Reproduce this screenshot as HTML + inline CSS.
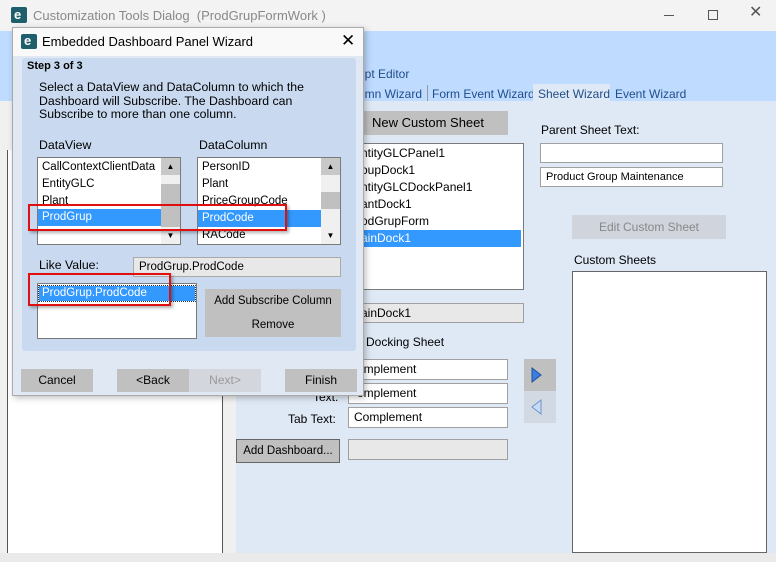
<!DOCTYPE html>
<html><head><meta charset="utf-8"><style>
*{box-sizing:border-box;margin:0;padding:0}
body{width:776px;height:562px;position:relative;overflow:hidden;background:#dfe8f5;font-family:"Liberation Sans",sans-serif;font-size:12px;color:#000}
.a{position:absolute}
.t{position:absolute;white-space:nowrap;line-height:14px}
.box{position:absolute;background:#fff;border:1px solid #7a7a7a}
.inp{position:absolute;background:#fff;border:1px solid #a0a0a0;padding-left:5px;line-height:18px;white-space:nowrap;overflow:hidden}
.btn{position:absolute;background:#c0c0c0;text-align:center;white-space:nowrap}
.it{position:absolute;left:4px;height:17px;line-height:17px;white-space:nowrap}
.sel{background:#3399ff;color:#fff}
.sb{position:absolute;top:0;bottom:0;right:0;width:19px;background:#f0f0f0}
.red{position:absolute;border:2px solid #e01010;box-shadow:2px 2px 3px rgba(0,0,0,.3)}
.s{font-size:11.5px}
</style></head><body>
<div class="a" style="left:0;top:0;width:776px;height:31px;background:#f3f3f3"></div>
<div class="a" style="left:11px;top:7px;width:16px;height:16px;background:#1f5f6b;border-radius:2px"></div>
<div class="t" style="left:14px;top:8px;color:#fff;font-weight:bold;font-size:13px">e</div>
<div class="t" style="left:33px;top:9px;font-size:13px;color:#888">Customization Tools Dialog &nbsp;(ProdGrupFormWork )</div>
<div class="a" style="left:664px;top:15px;width:10px;height:1px;background:#555"></div>
<div class="a" style="left:708px;top:10px;width:10px;height:10px;border:1px solid #555"></div>
<div class="t" style="left:749px;top:6px;font-size:16px;color:#555">✕</div>
<div class="a" style="left:0;top:31px;width:776px;height:70px;background:#bfdbff"></div>
<div class="t" style="left:358px;top:67px;color:#1f4e8c">ript Editor</div>
<div class="t" style="left:358px;top:87px;color:#1f4e8c">umn Wizard</div>
<div class="a" style="left:427px;top:85px;width:1px;height:16px;background:#999"></div>
<div class="t" style="left:432px;top:87px;color:#1f4e8c">Form Event Wizard</div>
<div class="a" style="left:533px;top:84px;width:77px;height:18px;background:#dfe8f5"></div>
<div class="t" style="left:538px;top:87px;color:#1f4e8c">Sheet Wizard</div>
<div class="t" style="left:615px;top:87px;color:#1f4e8c">Event Wizard</div>
<div class="a" style="left:0;top:101px;width:236px;height:461px;background:#f0f0f0"></div>
<div class="a" style="left:7px;top:150px;width:216px;height:406px;background:#fff;border-left:1px solid #555;border-right:1px solid #555"></div>
<div class="a" style="left:0;top:553px;width:776px;height:9px;background:#eaeaea"></div>
<div class="btn" style="left:348px;top:111px;width:160px;height:24px;line-height:24px;font-size:13px">New Custom Sheet</div>
<div class="box" style="left:348px;top:143px;width:176px;height:147px;overflow:hidden">
<div class="it" style="top:1px;left:12px">ntityGLCPanel1</div>
<div class="it" style="top:18px;left:12px">oupDock1</div>
<div class="it" style="top:35px;left:12px">ntityGLCDockPanel1</div>
<div class="it" style="top:52px;left:12px">antDock1</div>
<div class="it" style="top:69px;left:12px">odGrupForm</div>
<div class="it sel" style="top:86px;left:0;width:172px;padding-left:12px">ainDock1</div>
</div>
<div class="inp" style="left:348px;top:303px;width:176px;height:20px;background:#e8e8e8;padding-left:12px">ainDock1</div>
<div class="t" style="left:366px;top:335px">Docking Sheet</div>
<div class="inp" style="left:348px;top:359px;width:160px;height:21px;padding-left:8px">omplement</div>
<div class="inp" style="left:348px;top:383px;width:160px;height:21px;padding-left:8px">omplement</div>
<div class="inp" style="left:348px;top:407px;width:160px;height:21px">Complement</div>
<div class="t" style="left:313px;top:390px">Text:</div>
<div class="t" style="left:288px;top:412px">Tab Text:</div>
<div class="btn" style="left:236px;top:439px;width:104px;height:24px;line-height:22px;border:1px solid #666;font-size:11.5px">Add Dashboard...</div>
<div class="inp" style="left:348px;top:439px;width:160px;height:21px;background:#e8e8e8"></div>
<div class="a" style="left:524px;top:359px;width:32px;height:32px;background:#c0c0c0"></div>
<svg class="a" style="left:530px;top:367px" width="14" height="16"><path d="M2 1 L11 8 L2 15 Z" fill="#3a7fe0" stroke="#1f4ea0"/></svg>
<div class="a" style="left:524px;top:391px;width:32px;height:32px;background:#d3d9e2"></div>
<svg class="a" style="left:530px;top:399px" width="14" height="16"><path d="M11 1 L2 8 L11 15 Z" fill="#c9dbf5" stroke="#6a95d0"/></svg>
<div class="t" style="left:541px;top:123px">Parent Sheet Text:</div>
<div class="inp" style="left:540px;top:143px;width:183px;height:20px"></div>
<div class="inp" style="left:540px;top:167px;width:183px;height:20px;font-size:11px">Product Group Maintenance</div>
<div class="btn" style="left:572px;top:215px;width:154px;height:24px;line-height:24px;background:#d0d5dd;color:#888">Edit Custom Sheet</div>
<div class="t" style="left:574px;top:253px">Custom Sheets</div>
<div class="box" style="left:572px;top:271px;width:195px;height:282px;border-color:#666"></div>
<div class="a" style="left:12px;top:27px;width:352px;height:369px;background:#e0e8f3;border:1px solid #aaa;box-shadow:2px 2px 6px rgba(0,0,0,.25)"></div>
<div class="a" style="left:13px;top:28px;width:350px;height:28px;background:#f9f9f9"></div>
<div class="a" style="left:21px;top:34px;width:16px;height:15px;background:#1f5f6b;border-radius:2px"></div>
<div class="t" style="left:24px;top:34px;color:#fff;font-weight:bold;font-size:13px">e</div>
<div class="t" style="left:42px;top:35px;font-size:13px">Embedded Dashboard Panel Wizard</div>
<div class="t" style="left:341px;top:31px;font-size:17px;line-height:20px">✕</div>
<div class="a" style="left:22px;top:58px;width:334px;height:293px;background:#c9daf0;border-radius:3px"></div>
<div class="t" style="left:27px;top:59px;font-weight:bold;font-size:11px">Step 3 of 3</div>
<div class="t" style="left:39px;top:81px;line-height:13.5px;font-size:12.3px">Select a DataView and DataColumn to which the<br>Dashboard will Subscribe. The Dashboard can<br>Subscribe to more than one column.</div>
<div class="t" style="left:39px;top:138px;font-size:12.3px">DataView</div>
<div class="t" style="left:199px;top:138px;font-size:12.3px">DataColumn</div>
<div class="box" style="left:37px;top:157px;width:144px;height:88px;overflow:hidden">
<div class="it s" style="top:1px">CallContextClientData</div>
<div class="it s" style="top:18px">EntityGLC</div>
<div class="it s" style="top:35px">Plant</div>
<div class="it sel s" style="top:51px;left:0;width:123px;padding-left:4px">ProdGrup</div>
<div class="sb"><div class="a" style="left:0;top:0;width:19px;height:17px;background:#c8c8c8;text-align:center;font-size:8px;line-height:17px">▲</div><div class="a" style="left:0;top:26px;width:19px;height:43px;background:#c0c0c0"></div><div class="a" style="left:0;bottom:0;width:19px;height:17px;text-align:center;font-size:8px;line-height:17px">▼</div></div>
</div>
<div class="box" style="left:197px;top:157px;width:144px;height:88px;overflow:hidden">
<div class="it s" style="top:1px">PersonID</div>
<div class="it s" style="top:18px">Plant</div>
<div class="it s" style="top:35px">PriceGroupCode</div>
<div class="it sel s" style="top:52px;left:0;width:123px;padding-left:4px">ProdCode</div>
<div class="it s" style="top:69px">RACode</div>
<div class="sb"><div class="a" style="left:0;top:0;width:19px;height:17px;background:#c8c8c8;text-align:center;font-size:8px;line-height:17px">▲</div><div class="a" style="left:0;top:34px;width:19px;height:17px;background:#c0c0c0"></div><div class="a" style="left:0;bottom:0;width:19px;height:17px;text-align:center;font-size:8px;line-height:17px">▼</div></div>
</div>
<div class="red" style="left:28px;top:204px;width:259px;height:27px"></div>
<div class="t" style="left:39px;top:258px;font-size:12.3px">Like Value:</div>
<div class="inp" style="left:133px;top:257px;width:208px;height:20px;background:#e8e8e8;font-size:11.5px;border-color:#aaa">ProdGrup.ProdCode</div>
<div class="box" style="left:37px;top:283px;width:160px;height:56px">
<div class="it sel s" style="top:2px;left:1px;width:156px;height:15px;line-height:15px;padding-left:3px;outline:1px dotted #333">ProdGrup.ProdCode</div>
</div>
<div class="red" style="left:28px;top:273px;width:143px;height:33px"></div>
<div class="btn" style="left:205px;top:289px;width:136px;height:48px;font-size:11.5px;line-height:24px">Add Subscribe Column<br>Remove</div>
<div class="btn" style="left:21px;top:369px;width:72px;height:23px;line-height:23px">Cancel</div>
<div class="btn" style="left:117px;top:369px;width:72px;height:23px;line-height:23px">&lt;Back</div>
<div class="btn" style="left:189px;top:369px;width:72px;height:23px;line-height:23px;background:#d3d6dc;color:#999">Next&gt;</div>
<div class="btn" style="left:285px;top:369px;width:72px;height:23px;line-height:23px">Finish</div>
</body></html>
